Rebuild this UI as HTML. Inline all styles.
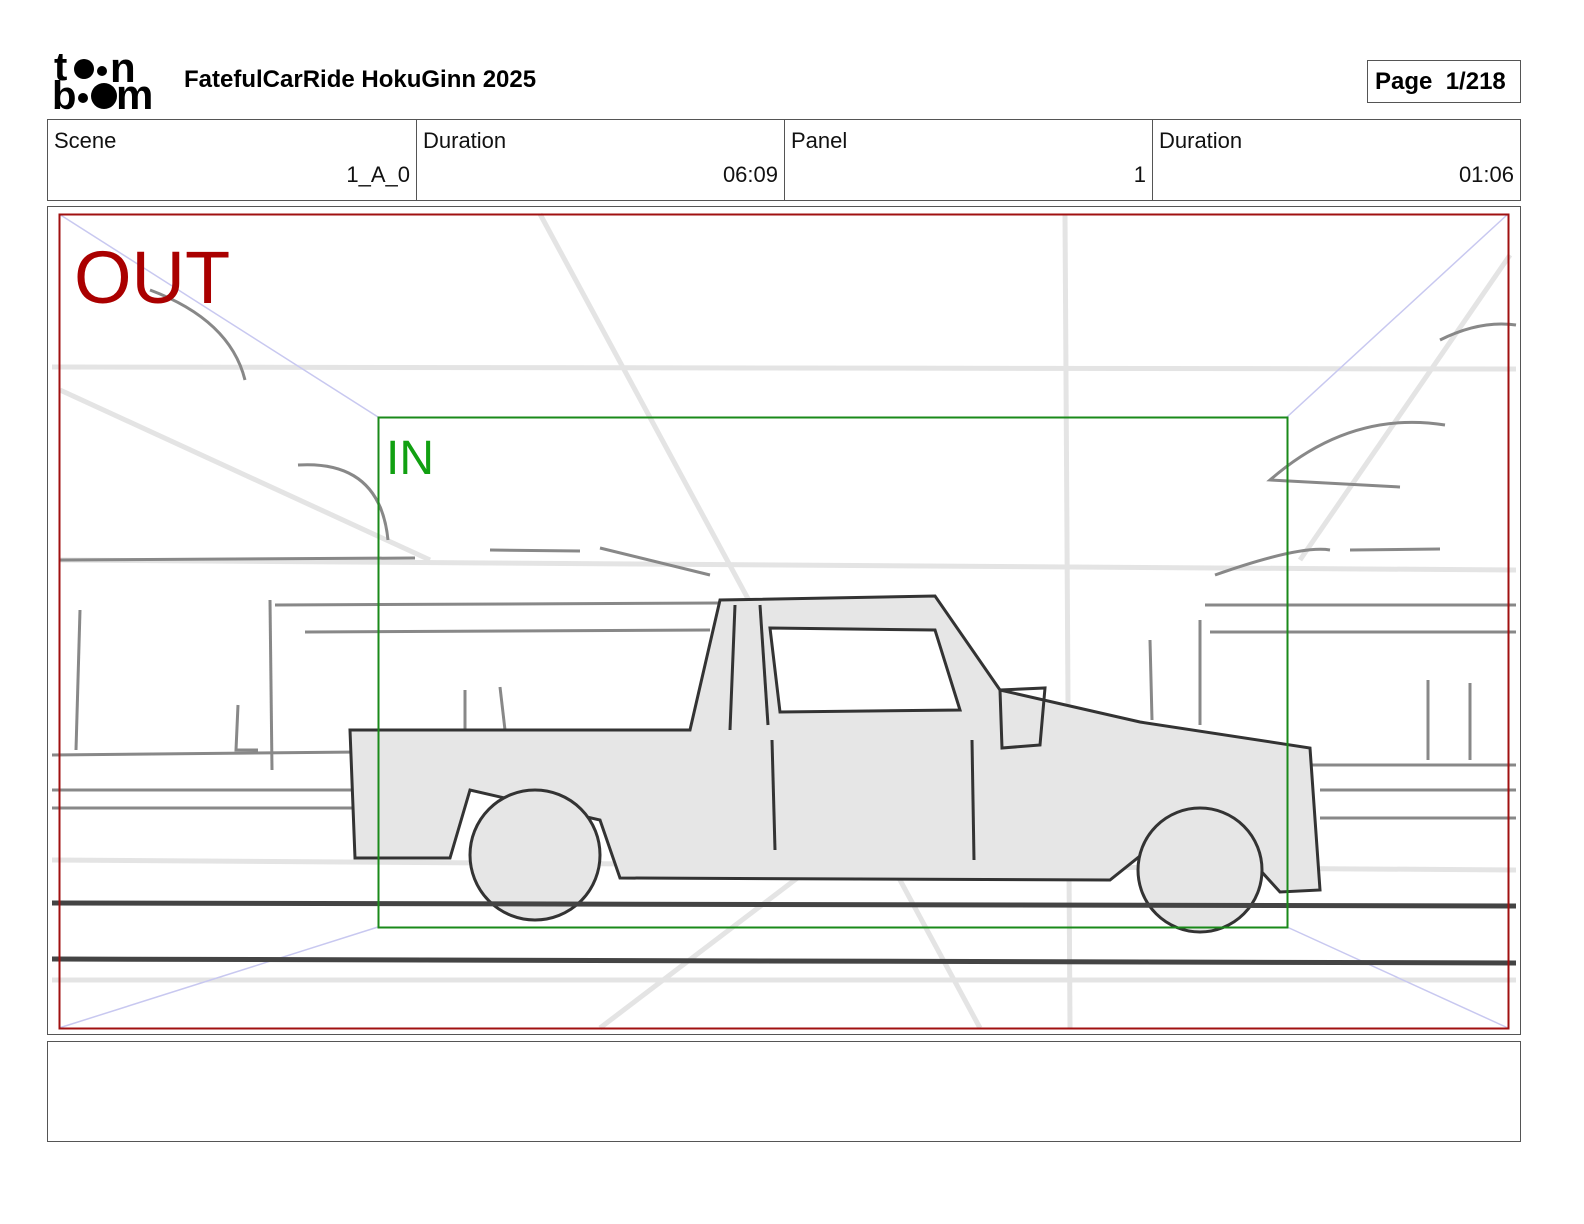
<!DOCTYPE html>
<html><head><meta charset="utf-8"><style>
body{margin:0;background:#fff;width:1584px;height:1224px;position:relative;font-family:"Liberation Sans",sans-serif;overflow:hidden}
.a{position:absolute}
.cell{position:absolute;top:119px;height:82px;border:1px solid #555;box-sizing:border-box;font-size:22px;color:#111}
.cell .l{position:absolute;left:6px;top:8px}
.cell .v{position:absolute;right:6px;top:42px}
</style></head><body>
<div class="a" style="left:52px;top:50px;width:112px;height:62px">
<svg width="112" height="62" viewBox="0 0 112 62">
<text x="2" y="30" font-family="Liberation Sans" font-weight="bold" font-size="40" fill="#000">t</text>
<circle cx="32" cy="19" r="10" fill="#000"/><circle cx="50" cy="21" r="5" fill="#000"/>
<text x="58" y="32" font-family="Liberation Sans" font-weight="bold" font-size="42" fill="#000">n</text>
<text x="0" y="59" font-family="Liberation Sans" font-weight="bold" font-size="40" fill="#000">b</text>
<circle cx="31" cy="48" r="5" fill="#000"/><circle cx="52" cy="46" r="13" fill="#000"/>
<text x="64" y="59" font-family="Liberation Sans" font-weight="bold" font-size="42" fill="#000">m</text>
</svg></div>
<div class="a" style="left:184px;top:66px;font-size:24px;font-weight:bold">FatefulCarRide HokuGinn 2025</div>
<div class="a" style="left:1367px;top:60px;width:154px;height:43px;border:1px solid #555;box-sizing:border-box;font-size:24px;font-weight:bold;line-height:41px;padding-left:7px;white-space:pre">Page  1/218</div>
<div class="cell" style="left:47px;width:370px"><span class="l">Scene</span><span class="v">1_A_0</span></div>
<div class="cell" style="left:416px;width:369px"><span class="l">Duration</span><span class="v">06:09</span></div>
<div class="cell" style="left:784px;width:369px"><span class="l">Panel</span><span class="v">1</span></div>
<div class="cell" style="left:1152px;width:369px"><span class="l">Duration</span><span class="v">01:06</span></div>
<div class="a" style="left:47px;top:206px;width:1474px;height:829px;border:1px solid #555;box-sizing:border-box"></div>
<svg class="a" style="left:0;top:0" width="1584" height="1224">
<g stroke="#e4e4e4" stroke-width="5" fill="none">
<line x1="540" y1="214" x2="980" y2="1028"/><line x1="1065" y1="214" x2="1070" y2="1028"/>
<line x1="52" y1="367" x2="1516" y2="369"/><line x1="60" y1="560" x2="1516" y2="570"/>
<line x1="60" y1="390" x2="430" y2="560"/><line x1="1510" y1="255" x2="1300" y2="560"/>
<line x1="600" y1="1028" x2="900" y2="800"/><line x1="52" y1="860" x2="1516" y2="870"/>
<line x1="52" y1="980" x2="1516" y2="980"/>
</g>
<g stroke="#c8c8f0" stroke-width="1.5"><line x1="59" y1="214" x2="378" y2="417"/><line x1="1508" y1="214" x2="1287" y2="417"/><line x1="59" y1="1028" x2="378" y2="927"/><line x1="1508" y1="1028" x2="1287" y2="927"/></g>
<g stroke="#888" stroke-width="3" fill="none">
<path d="M150 290 Q230 320 245 380"/><path d="M298 465 Q380 460 388 540"/><path d="M60 560 L415 558"/><path d="M275 605 L720 603"/><path d="M305 632 L710 630"/>
<path d="M52 755 L360 752"/><path d="M52 790 L360 790"/><path d="M52 808 L360 808"/>
<path d="M270 600 L272 770"/><path d="M80 610 L76 750"/><path d="M238 705 L236 750 L258 750"/>
<path d="M490 550 L580 551"/><path d="M600 548 L710 575"/><path d="M1440 340 Q1480 320 1516 325"/><path d="M1445 425 Q1350 410 1270 480 L1400 487"/>
<path d="M1215 575 Q1300 545 1330 550"/><path d="M1350 550 L1440 549"/><path d="M1205 605 L1516 605"/><path d="M1210 632 L1516 632"/>
<path d="M1310 765 L1516 765"/><path d="M1320 790 L1516 790"/><path d="M1320 818 L1516 818"/>
<path d="M1428 680 L1428 760"/><path d="M1470 683 L1470 760"/><path d="M1150 640 L1152 720"/><path d="M1200 620 L1200 725"/>
<path d="M465 690 L465 730"/><path d="M500 687 L505 730"/>
</g>
<path d="M350 730 L690 730 L720 600 L935 596 L1000 690 L1140 722 L1310 748 L1320 890 L1280 892 L1260 870 L1160 840 L1110 880 L620 878 L600 820 L470 790 L450 858 L355 858 Z" fill="#e6e6e6" stroke="#333" stroke-width="3"/>
<path d="M770 628 L935 630 L960 710 L780 712 Z" fill="#fff" stroke="#333" stroke-width="3"/>
<g fill="#e6e6e6" stroke="#333" stroke-width="3"><circle cx="535" cy="855" r="65"/><circle cx="1200" cy="870" r="62"/></g>
<g stroke="#333" stroke-width="3" fill="none"><path d="M772 740 L775 850"/><path d="M972 740 L974 860"/><path d="M735 605 L730 730"/><path d="M760 605 L768 725"/><path d="M1000 690 L1045 688 L1040 745 L1002 748 Z"/></g>
<line x1="52" y1="903" x2="1516" y2="906" stroke="#444" stroke-width="5"/>
<line x1="52" y1="959" x2="1516" y2="963" stroke="#444" stroke-width="5"/>
<rect x="59.5" y="214.5" width="1449" height="814" fill="none" stroke="#a01010" stroke-width="2"/>
<rect x="378.5" y="417.5" width="909" height="510" fill="none" stroke="#1a8a1a" stroke-width="2"/>
<text x="74" y="303" font-family="Liberation Sans" font-size="74" fill="#a00">OUT</text>
<text x="386" y="474" font-family="Liberation Sans" font-size="48" fill="#11a011">IN</text>
</svg>
<div class="a" style="left:47px;top:1041px;width:1474px;height:101px;border:1px solid #555;box-sizing:border-box"></div>
</body></html>
